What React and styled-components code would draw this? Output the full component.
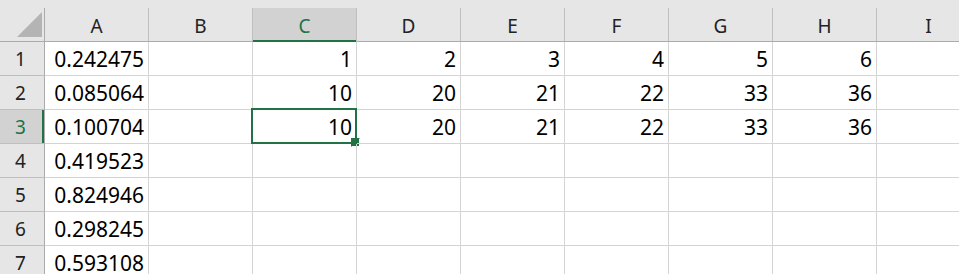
import React from "react"
import styled, { createGlobalStyle } from "styled-components"

const GlobalStyle = createGlobalStyle`
  html, body {
    margin: 0;
    padding: 0;
    background: #ffffff;
    overflow: hidden;
  }
  body {
    font-family: "Noto Sans", "Open Sans", sans-serif;
  }
`

const green = "#217346"
const columns = ["A", "B", "C", "D", "E", "F", "G", "H", "I"]
const selectedCol = "C"
const selectedRow = 3

const rows = [
  { A: "0.242475", C: 1, D: 2, E: 3, F: 4, G: 5, H: 6 },
  { A: "0.085064", C: 10, D: 20, E: 21, F: 22, G: 33, H: 36 },
  { A: "0.100704", C: 10, D: 20, E: 21, F: 22, G: 33, H: 36 },
  { A: "0.419523" },
  { A: "0.824946" },
  { A: "0.298245" },
  { A: "0.593108" },
]

const Sheet = styled.div`
  width: 959px;
  height: 274px;
  overflow: hidden;
  background: #ffffff;
`

const HeaderRow = styled.div`
  display: flex;
  height: 42px;
  padding-top: 8px;
  box-sizing: border-box;
  background: #e6e6e6;
  border-bottom: 1px solid #ababab;
`

const Corner = styled.div`
  flex: 0 0 45px;
  box-sizing: border-box;
  border-right: 1px solid #ababab;
  svg {
    display: block;
    margin: 4px 0 0 17px;
  }
`

const ColHead = styled.div`
  flex: 0 0 104px;
  box-sizing: border-box;
  display: flex;
  align-items: center;
  justify-content: center;
  font-size: 19px;
  color: ${p => (p.$active ? green : "#222")};
  background: ${p => (p.$active ? "#d2d2d2" : "transparent")};
  border-right: 1px solid #bfbfbf;
  box-shadow: ${p => (p.$active ? `inset 0 -2px 0 ${green}` : "none")};
  margin-bottom: ${p => (p.$active ? "-1px" : "0")};
  padding-top: 2px;
`

const Row = styled.div`
  display: flex;
  height: 34px;
`

const RowHead = styled.div`
  flex: 0 0 45px;
  box-sizing: border-box;
  display: flex;
  align-items: center;
  padding-left: 15px;
  font-size: 19px;
  color: ${p => (p.$active ? green : "#222")};
  background: ${p => (p.$active ? "#d2d2d2" : "#e6e6e6")};
  border-right: 1px solid #ababab;
  border-bottom: 1px solid #bfbfbf;
  box-shadow: ${p => (p.$active ? `inset -2px 0 0 ${green}` : "none")};
`

const Cell = styled.div`
  flex: 0 0 104px;
  box-sizing: border-box;
  position: relative;
  display: flex;
  align-items: center;
  justify-content: flex-end;
  padding: 1px 4px 0 0;
  font-size: 21px;
  color: #000;
  border-right: 1px solid #d4d4d4;
  border-bottom: 1px solid #d4d4d4;
`

const Selection = styled.div`
  position: absolute;
  left: -2px;
  top: -2px;
  right: -1px;
  bottom: -1px;
  border: 2px solid ${green};
  pointer-events: none;
`

const Handle = styled.span`
  position: absolute;
  right: -5px;
  bottom: -5px;
  width: 7px;
  height: 7px;
  background: ${green};
  border: 1px solid #ffffff;
  border-top-color: transparent;
  border-left-color: transparent;
`

export default function App() {
  return (
    <Sheet>
      <GlobalStyle />
      <HeaderRow>
        <Corner>
          <svg width="26" height="26" viewBox="0 0 26 26">
            <polygon points="25,0 25,25 0,25" fill="#b4b4b4" />
          </svg>
        </Corner>
        {columns.map(c => (
          <ColHead key={c} $active={c === selectedCol}>
            {c}
          </ColHead>
        ))}
      </HeaderRow>
      {rows.map((r, i) => (
        <Row key={i}>
          <RowHead $active={i + 1 === selectedRow}>{i + 1}</RowHead>
          {columns.map(c => (
            <Cell key={c}>
              {r[c]}
              {c === selectedCol && i + 1 === selectedRow && (
                <Selection>
                  <Handle />
                </Selection>
              )}
            </Cell>
          ))}
        </Row>
      ))}
    </Sheet>
  )
}
